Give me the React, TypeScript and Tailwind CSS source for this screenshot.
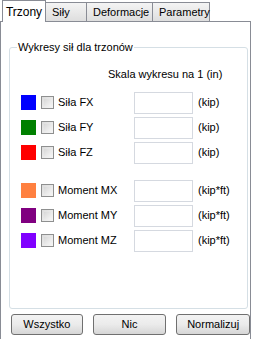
import React from "react";

const rows = [
  { label: "Siła FX", color: "bg-[#0000ff]", unit: "(kip)" },
  { label: "Siła FY", color: "bg-[#008000]", unit: "(kip)" },
  { label: "Siła FZ", color: "bg-[#ff0000]", unit: "(kip)" },
  { label: "Moment MX", color: "bg-[#ff8040]", unit: "(kip*ft)" },
  { label: "Moment MY", color: "bg-[#800080]", unit: "(kip*ft)" },
  { label: "Moment MZ", color: "bg-[#8000ff]", unit: "(kip*ft)" },
];

function Row({ label, color, unit }: { label: string; color: string; unit: string }) {
  return (
    <div className="flex items-center h-[25px]">
      <div className={`w-[15px] h-[15px] ml-[11px] ${color}`} />
      <div className="ml-[5px] w-[13px] h-[13px] border border-[#8e8f8f] bg-gradient-to-br from-[#dcdcdc] to-[#f6f6f6] p-[2px]">
        <div className="w-full h-full bg-gradient-to-br from-[#d8d8d8] to-[#f4f4f4]" />
      </div>
      <span className="ml-[4px] w-[76px]">{label}</span>
      <div className="w-[59px] h-[22px] border border-[#d5d9e0] bg-white" />
      <span className="ml-[5px]">{unit}</span>
    </div>
  );
}

function Tab({ label, active }: { label: string; active?: boolean }) {
  if (active) {
    return (
      <div className="h-[22px] mb-[-1px] w-[44px] ml-[2px] border border-b-0 border-[#898c95] bg-white flex items-start justify-center pt-[2px] z-10 text-[12px]">
        {label}
      </div>
    );
  }
  return (
    <div className="h-[19px] border border-b-0 border-l-0 border-[#898c95] bg-gradient-to-b from-[#f4f4f4] to-[#dedede] flex items-center px-[6px]">
      {label}
    </div>
  );
}

function Btn({ label, w }: { label: string; w: string }) {
  return (
    <div className={`${w} h-[21px] rounded-[3px] border border-[#707070] bg-gradient-to-b from-[#f3f3f3] via-[#ebebeb] to-[#d6d6d6] flex items-center justify-center`}>
      {label}
    </div>
  );
}

export default function App() {
  return (
    <div className="w-[254px] h-[339px] bg-white overflow-hidden text-[11px] text-black font-['Liberation_Sans',Arial,sans-serif]">
      <div className="flex items-end h-[21px]">
        <Tab label="Trzony" active />
        <div className="w-[41px]"><Tab label="Siły" /></div>
        <div className="w-[66px]"><Tab label="Deformacje" /></div>
        <div className="w-[57px]"><Tab label="Parametry" /></div>
      </div>
      <div className="w-[251px] h-[318px] border border-b-0 border-[#898c95] bg-white flex flex-col">
        <fieldset className="ml-[8px] mt-[19px] w-[239px] h-[268px] border border-[#d5dfe5] rounded-[3px] px-0">
          <legend className="ml-[7px] px-[1px] leading-[13px]">Wykresy sił dla trzonów</legend>
          <div className="pl-[98px] mt-[14px] leading-[13px]">Skala wykresu na 1 (in)</div>
          <div className="mt-[9px]">
            {rows.slice(0, 3).map((r) => (
              <Row key={r.label} {...r} />
            ))}
          </div>
          <div className="mt-[13px]">
            {rows.slice(3).map((r) => (
              <Row key={r.label} {...r} />
            ))}
          </div>
        </fieldset>
        <div className="flex mt-[5px] ml-[10px] gap-[10px]">
          <Btn label="Wszystko" w="w-[72px]" />
          <Btn label="Nic" w="w-[74px]" />
          <Btn label="Normalizuj" w="w-[74px]" />
        </div>
      </div>
    </div>
  );
}
